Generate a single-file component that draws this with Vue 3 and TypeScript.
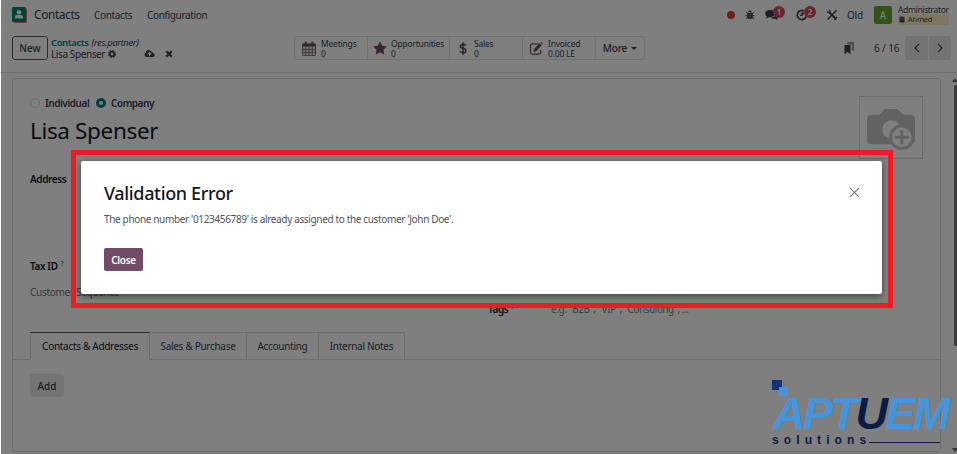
<script setup lang="ts">
interface Stat { key: string; label: string; value: string }

const stats: Stat[] = [
  { key: 'meetings', label: 'Meetings', value: '0' },
  { key: 'opportunities', label: 'Opportunities', value: '0' },
  { key: 'sales', label: 'Sales', value: '0' },
  { key: 'invoiced', label: 'Invoiced', value: '0.00 LE' },
]
const tabs: { key: string; label: string }[] = [
  { key: 'contacts', label: 'Contacts & Addresses' },
  { key: 'sales', label: 'Sales & Purchase' },
  { key: 'accounting', label: 'Accounting' },
  { key: 'notes', label: 'Internal Notes' },
]
</script>

<template>
  <div class="app">
    <header class="navbar">
      <svg class="app-icon" viewBox="0 0 15 16">
        <rect x="2" y="1" width="13" height="15" rx="1.5" fill="#e06c75" />
        <rect width="14" height="15" rx="1.5" fill="#088270" />
        <circle cx="7" cy="5.3" r="2.3" fill="#fff" />
        <path d="M3 11.5V10q0-2 2-2h4q2 0 2 2v1.500z" fill="#fff" />
      </svg>
      <span class="brand">Contacts</span>
      <nav class="menu"><span class="m1">Contacts</span><span class="m2">Configuration</span></nav>
      <div class="systray">
        <i class="record"></i>
        <svg class="bug" viewBox="0 0 10 10" fill="#374151" stroke="#374151">
          <path d="M3.200 2.300q0-1.800 1.800-1.800t1.800 1.800z" stroke="none" />
          <path d="M2.300 3h5.400v3.500q0 2.700-2.700 2.700T2.300 6.500z" stroke="none" />
          <path d="M1 2.200L3 4M9 2.200L7 4M.5 5.700h9M1.200 9L3 7.200M8.800 9L7 7.200" fill="none" />
          <path d="M5 4v5" stroke="#fff" stroke-width=".6" />
        </svg>
        <div class="notif chat">
          <svg viewBox="0 0 14 12" fill="#374151">
            <path d="M5.300 1C8 1 10.400 2.400 10.400 4.600S8 8.200 5.300 8.200L4 8.100Q2.600 9.300.8 9.400L2 7.600Q.2 6.500.2 4.600C.2 2.400 2.600 1 5.300 1z" />
            <path d="M11.300 4c2.900 1.300 2.700 4 .7 5.200l1.100 1.600q-1.700 0-3.100-1.200-2.800.4-4.500-.9Q10.600 8.500 11.300 4z" />
          </svg>
          <b>1</b>
        </div>
        <div class="notif clock">
          <svg viewBox="0 0 12 12" fill="none" stroke="#374151">
            <path d="M10.500 6A4.600 4.600 0 1 1 8 1.900" stroke-width="1.700" />
            <path d="M6 6L8.300 3.600M6 3v3.300H4" stroke-width="1.200" />
          </svg>
          <b>2</b>
        </div>
        <svg class="tools" viewBox="0 0 12 12" fill="none" stroke="#374151">
          <path d="M3.600 3.600L10.200 10.300" stroke-width="2" />
          <path d="M10.600 1.200L1.500 10.500" stroke-width="1.500" />
          <path d="M1 2.500q2.500 2.500 3.200.2Q4.300 1.500 2.800.8M11.200 8.500q-2.500-.5-2.500 2.500" stroke-width="1.200" />
        </svg>
        <span class="old">Old</span>
        <span class="avatar">A</span>
        <div class="user">
          <span class="admin">Administrator</span>
          <span class="db">
            <svg viewBox="0 0 7 8"><path d="M.5 1.500Q3.500-.5 6.500 1.500v5.500q-3 1.500-6 0z" fill="#374151" /><path d="M.5 2.500h6M.5 4.500h6" stroke="#fff1c2" stroke-width=".4" /></svg>
            <span>Ahmed</span>
          </span>
        </div>
      </div>
    </header>

    <section class="control">
      <button class="new">New</button>
      <div class="crumbs">
        <div class="crumb-top"><b>Contacts</b><em>(res.partner)</em></div>
        <div class="crumb-sub">
          <span>Lisa Spenser</span>
          <svg class="gear" viewBox="0 0 10 10"><circle cx="5" cy="5" r="2.900" fill="none" stroke="#374151" stroke-width="2.200" /><circle cx="5" cy="5" r="4.300" fill="none" stroke="#374151" stroke-width="1.400" stroke-dasharray="1.800 1.577" /></svg>
        </div>
      </div>
      <svg class="cloud" viewBox="0 0 12 10"><path d="M2.700 9A2.600 2.600 0 0 1 2 4Q2.200 1 5 1q2.100 0 2.900 2 2.300-.3 2.300 1.800 1.600.6 1.600 2.100Q11.700 9 9.500 9z" fill="#374151" /><path d="M6 8V4.300M4 6l2-2 2 2" fill="none" stroke="#fff" stroke-width="1.200" /></svg>
      <svg class="discard" viewBox="0 0 8 8"><path d="M1.200 1.200l5.600 5.600M6.800 1.200L1.200 6.800" stroke="#374151" stroke-width="2.100" /></svg>
      <div class="stats">
        <div v-for="s in stats" :key="s.key" class="stat" :class="s.key">
          <svg v-if="s.key === 'meetings'" viewBox="0 0 14 15" fill="none" stroke="#714b67">
            <path d="M.6 3h12.800v11.300H.6zM.6 8.400h12.800M.6 11.300h12.800M3.800 5v9M7 5v9M10.200 5v9" stroke-width=".9" />
            <path d="M.5 4.200h13" stroke-width="2.700" /><path d="M3.800.5v3M10.200.5v3" stroke-width="2" />
          </svg>
          <svg v-else-if="s.key === 'opportunities'" viewBox="0 0 14 14" fill="#714b67"><path d="M7 .3l2.100 4.500 4.800.6-3.500 3.400.9 4.900L7 11.300l-4.300 2.400.9-4.900L.1 5.400l4.800-.6z" /></svg>
          <svg v-else-if="s.key === 'sales'" viewBox="0 0 9 15" fill="none" stroke="#714b67"><path d="M7.800 4.200Q6.800 2.900 4.700 2.900 1.500 2.900 1.500 5T4.600 7.300Q7.800 7.700 7.800 10T4.500 12.100Q2 12.100.9 10.500M4.500.5v14" stroke-width="1.800" /></svg>
          <svg v-else viewBox="0 0 15 14" fill="none" stroke="#714b67"><path d="M9.500 2H3Q1 2 1 4v7q0 2 2 2h7q2 0 2-2V8.500" stroke-width="1.300" /><path d="M6.200 8.500L12 2.400" stroke-width="3.200" /><path d="M12.600 1.700l.8-.8" stroke-width="3" /><path d="M4.800 10.200l.6-2.600 1.900 1.900z" fill="#714b67" /></svg>
          <div><span>{{ s.label }}</span><span class="value">{{ s.value }}</span></div>
        </div>
        <div class="more"><span>More</span><i></i></div>
      </div>
      <div class="pager">
        <svg class="bookmark" viewBox="0 0 10 13"><path d="M3.500 0H10v9.500L8 8V2.500H3.500z" fill="#9299a3" /><path d="M.5 3h6v9.500l-3-2.700-3 2.700z" fill="#374151" /></svg>
        <span class="count">6 / 16</span>
        <div class="arrows">
          <button><svg viewBox="0 0 6 10"><path d="M5 .8L1 5l4 4.200" /></svg></button>
          <button><svg viewBox="0 0 6 10"><path d="M1 .8L5 5 1 9.200" /></svg></button>
        </div>
      </div>
    </section>

    <main class="content">
      <div class="sheet">
        <div class="sheet-head">
          <div class="identity">
            <div class="radios"><i class="radio"></i><b class="ind">Individual</b><i class="radio on"></i><b class="comp">Company</b></div>
            <h1>Lisa Spenser</h1>
          </div>
          <div class="photo">
            <svg viewBox="0 0 50 44">
              <path d="M5 7h8l5-6h13l6 6h7q5 0 5 5v20q0 5-5 5H5q-5 0-5-5V12Q0 7 5 7z" fill="#c4c4c4" />
              <circle cx="25" cy="22" r="9.500" fill="#fff" />
              <circle cx="35.500" cy="30" r="13" fill="#c4c4c4" /><circle cx="35.500" cy="30" r="10" fill="#fff" />
              <path d="M35.500 22.800v14.400M28.300 30h14.400" stroke="#c4c4c4" stroke-width="3" />
            </svg>
          </div>
        </div>
        <div class="fields">
          <div class="col">
            <b class="address">Address</b>
            <div class="tax"><b>Tax ID</b><sup>?</sup></div>
            <span class="sequence">Customer Sequence</span>
          </div>
          <div class="col tags"><b>Tags <sup>?</sup></b><span>e.g. "B2B", "VIP", "Consulting", ...</span></div>
        </div>
        <div class="tabs">
          <div v-for="(t, i) in tabs" :key="t.key" class="tab" :class="[t.key, { active: i === 0 }]"><span>{{ t.label }}</span></div>
        </div>
        <div class="tab-body"><button class="add">Add</button></div>
      </div>
      <div class="scrollbar"><i class="up"></i><i class="thumb"></i><i class="down"></i></div>
    </main>

    <div class="overlay"></div>
    <div class="frame">
      <div class="modal">
        <div class="modal-head">
          <h2>Validation Error</h2>
          <svg viewBox="0 0 12 12"><path d="M1 1l10 10M11 1L1 11" stroke="#777" stroke-width="1.200" /></svg>
        </div>
        <p>The phone number '0123456789' is already assigned to the customer 'John Doe'.</p>
        <button class="close">Close</button>
      </div>
    </div>

    <div class="logo">
      <div class="squares"><i></i><i></i></div>
      <div class="word">APT<span>U</span>EM</div>
      <div class="solutions"><span>solutions</span><i></i></div>
    </div>
  </div>
</template>

<style>
body { margin: 0; overflow: hidden; }
</style>

<style scoped>
* { box-sizing: border-box; }
.app { position: relative; width: 957px; height: 454px; overflow: hidden; background: #fff; color: #374151; font: 10px/12px "Noto Sans", sans-serif; }
svg { display: block; flex: none; overflow: visible; }
i { display: block; flex: none; }
span, b, em { white-space: nowrap; }
b { font-weight: 600; }
button { font: 600 10px/12px "Noto Sans", sans-serif; color: #374151; padding: 0; border: 0; display: flex; align-items: center; justify-content: center; white-space: nowrap; }

.navbar { height: 30px; display: flex; align-items: center; padding-left: 12px; }
.app-icon { width: 15px; height: 16px; }
.brand { margin-left: 7px; width: 60px; font-size: 12px; letter-spacing: -.45px; }
.menu { display: flex; }
.m1 { width: 53px; letter-spacing: -.35px; }
.m2 { letter-spacing: -.35px; }
.systray { display: flex; align-items: center; margin-left: auto; padding-right: 8px; }
.record { width: 8px; height: 8px; border-radius: 50%; background: #dc3c36; }
.bug { width: 10px; height: 10px; margin-left: 10px; }
.notif { position: relative; height: 12px; }
.notif b { position: absolute; left: 8px; top: -3px; width: 12px; height: 12px; border-radius: 6px; background: #d44c59; color: #fff; font-size: 8px; text-align: center; }
.chat { width: 14px; margin-left: 10px; }
.chat svg { width: 14px; height: 12px; }
.clock { width: 12px; margin-left: 17px; }
.clock svg { width: 12px; height: 12px; }
.tools { width: 12px; height: 12px; margin-left: 18px; }
.old { margin-left: 9px; width: 27px; letter-spacing: -.2px; }
.avatar { width: 18px; height: 18px; border-radius: 2px; background: #5fa82b; color: #fff; text-align: center; line-height: 18px; }
.user { width: 51px; margin-left: 6px; padding-bottom: 1px; }
.admin { display: block; font-size: 8.500px; line-height: 9px; letter-spacing: -.35px; }
.db { display: flex; align-items: center; height: 11px; background: #fff1c2; font-size: 7.500px; padding-left: 1px; gap: 3px; border-radius: 1px; letter-spacing: -.2px; }
.db svg { width: 6px; height: 7px; }

.control { height: 43px; display: flex; padding-left: 12px; border-bottom: 1px solid #d8dadd; }
.new { width: 36px; height: 24px; margin-top: 6px; background: #fff; border: 1px solid #714b67; border-radius: 3px; font-weight: 500; }
.crumbs { width: 93px; margin-left: 3px; padding-top: 7px; }
.crumb-top { display: flex; gap: 3px; font-size: 9.500px; line-height: 11px; }
.crumb-top b { color: #017e84; letter-spacing: -.4px; }
.crumb-top em { letter-spacing: -.4px; }
.crumb-sub { display: flex; align-items: center; gap: 3px; }
.crumb-sub span { letter-spacing: -.4px; }
.gear { width: 8px; height: 8px; }
.cloud { width: 11px; height: 9px; margin-top: 19px; }
.discard { width: 8px; height: 8px; margin: 20px 0 0 10px; }
.stats { display: flex; height: 24px; width: 351px; margin: 6px 0 0 121px; border: 1px solid #dee2e6; border-radius: 3px; }
.stat { display: flex; align-items: center; border-right: 1px solid #dee2e6; font-size: 8.500px; line-height: 9px; letter-spacing: -.2px; }
.stat div { padding-top: 1px; }
.stat div span { display: block; line-height: 9.500px; }
.meetings { width: 73px; padding-left: 7px; gap: 5px; }
.meetings svg { width: 14px; height: 15px; }
.opportunities { width: 82px; padding-left: 5px; gap: 4px; }
.opportunities svg { width: 14px; height: 14px; }
.sales { width: 73px; padding-left: 9px; gap: 7px; }
.sales svg { width: 8px; height: 15px; }
.invoiced { width: 73px; padding-left: 6px; gap: 4px; }
.invoiced svg { width: 15px; height: 13px; }
.more { display: flex; flex: 1; align-items: center; justify-content: center; gap: 4px; font-weight: 500; letter-spacing: -.2px; }
.more i { border: 3px solid transparent; border-top-color: #374151; border-bottom: 0; }
.pager { display: flex; align-items: center; height: 24px; margin: 6px 6px 0 auto; }
.bookmark { width: 10px; height: 13px; }
.count { margin-left: 20px; width: 31px; letter-spacing: -.1px; }
.arrows { display: flex; gap: 1px; }
.arrows button { width: 22px; height: 24px; background: #e7e9ed; }
.arrows button:first-child { border-radius: 3px 0 0 3px; width: 23px; }
.arrows button:last-child { border-radius: 0 3px 3px 0; }
.arrows svg { width: 6px; height: 10px; fill: none; stroke: #374151; stroke-width: 1.200; }

.content { height: 381px; display: flex; background: #fdfdfd; padding: 5px 0 2px 12px; }
.sheet { width: 929px; height: 374px; background: #fff; border: 1px solid #d8dadd; border-radius: 3px; }
.sheet-head { display: flex; justify-content: space-between; height: 91px; padding: 17px 17px 0; }
.radios { display: flex; align-items: center; height: 14px; }
.radio { width: 10px; height: 10px; border: 1px solid #d8dadd; border-radius: 50%; }
.radio.on { border: 3px solid #017e84; background: #fff; }
.ind { margin-left: 5px; width: 51px; letter-spacing: -.45px; }
.comp { margin-left: 5px; letter-spacing: -.45px; }
h1 { margin: 6px 0 0; font-size: 22.500px; line-height: 30px; font-weight: 400; letter-spacing: -.35px; color: #111827; }
.photo { width: 64px; height: 63px; border: 1px solid #d8dadd; padding: 11px 0 0 7px; flex: none; }
.photo svg { width: 49px; height: 43px; }
.fields { display: flex; height: 162px; padding-left: 17px; }
.col { width: 458px; }
.col > * { display: block; }
.col b { color: #111827; letter-spacing: -.4px; }
.address { padding-top: 3px; height: 90px; }
.col .tax { display: flex; gap: 3px; height: 26px; }
sup { color: #017e84; font-size: 7px; line-height: 7px; vertical-align: top; }
.sequence { color: #6b7280; letter-spacing: -.3px; }
.tags { display: flex; padding-top: 133px; }
.col.tags b { width: 63px; margin-left: 3px; }
.tags span { color: #7c828d; letter-spacing: -.43px; }
.tabs { display: flex; height: 28px; padding-left: 17px; border-bottom: 1px solid #d8dadd; }
.tab { height: 28px; border: 1px solid #d8dadd; border-left: 0; display: flex; align-items: center; justify-content: center; flex: none; letter-spacing: -.3px; }
.tab.active { background: #fff; border-left: 1px solid #d8dadd; border-top-color: #714b67; border-bottom-color: #fff; color: #111827; }
.tab.contacts { width: 120px; }
.tab.sales { width: 97px; padding: 0; }
.tab.accounting { width: 72px; }
.tab.notes { width: 86px; }
.tab-body { padding: 14px 17px; }
.add { width: 34px; height: 23px; border-radius: 3px; background: #e7e9ed; font-weight: 500; }
.scrollbar { display: flex; flex-direction: column; align-items: center; width: 4px; margin-left: auto; }
.up { border: 3px solid transparent; border-bottom: 4px solid #666; border-top: 0; }
.thumb { width: 3px; height: 261px; margin-top: 3px; border-radius: 2px 0 0 2px; background: #777; align-self: flex-end; }
.down { margin-top: auto; border: 3px solid transparent; border-top: 4px solid #666; border-bottom: 0; }

.overlay { position: absolute; inset: 0 0 0 1px; background: rgba(0, 0, 0, .5); }
.frame { position: absolute; left: 71px; top: 150px; width: 822px; height: 158px; border: 5px solid #ed1c24; padding: 6px 6px 9px 5px; overflow: hidden; }
.modal { height: 133px; background: #fff; border-radius: 2px; box-shadow: 0 2px 6px rgba(0, 0, 0, .5); padding: 21px 22px 0 23px; }
.modal-head { display: flex; justify-content: space-between; align-items: center; height: 22px; }
.modal-head svg { width: 11px; height: 11px; margin-top: -2px; }
h2 { margin: 0; color: #111827; font-size: 18px; line-height: 22px; font-weight: 500; letter-spacing: -.35px; }
p { margin: 8px 0 0; line-height: 14px; letter-spacing: -.35px; white-space: nowrap; color: #4b5360; }
.close { width: 39px; height: 23px; margin-top: 22px; background: #714b67; color: #fff; border-radius: 2px; letter-spacing: -.3px; }

.logo { position: absolute; left: 772px; top: 380px; width: 184px; height: 68px; font-family: "Liberation Sans", sans-serif; font-weight: 700; }
.squares { height: 15px; }
.squares i { width: 10px; height: 10px; background: #12327c; }
.squares i + i { width: 9px; height: 9px; margin: -3px 0 0 7px; background: #4594dc; }
.word { height: 38px; margin-left: 1px; color: #4594dc; font-size: 45px; line-height: 38px; font-style: italic; letter-spacing: -2.500px; }
.word span { color: #0c1b46; }
.solutions { display: flex; height: 14px; color: #0c1b46; font-size: 12px; line-height: 14px; letter-spacing: 5.100px; }
.solutions i { width: 71px; height: 1px; margin: 9px 0 0 -2px; background: #0c1b46; }
</style>
